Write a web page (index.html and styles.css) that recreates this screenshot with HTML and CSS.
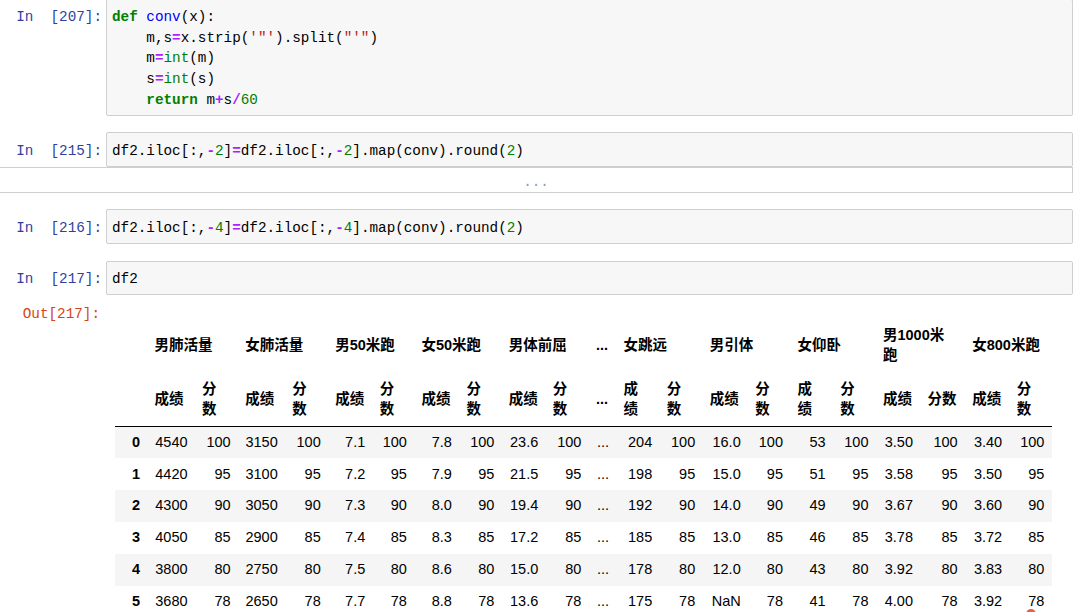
FILE: index.html
```html
<!DOCTYPE html>
<html lang="zh-CN">
<head>
<meta charset="utf-8">
<title>df2</title>
<link rel="stylesheet" href="styles.css">
</head>
<body>
<div class="nb">
  <div class="cell first">
    <div class="prompt in">In  [207]:</div>
    <div class="input code">
      <div class="line"><span class="k">def</span> <span class="nf">conv</span><span>(x):</span></div>
      <div class="line"><span>    m,s</span><span class="o">=</span><span>x.strip(</span><span class="s">'&quot;'</span><span>).split(</span><span class="s">&quot;'&quot;</span><span>)</span></div>
      <div class="line"><span>    m</span><span class="o">=</span><span class="nb2">int</span><span>(m)</span></div>
      <div class="line"><span>    s</span><span class="o">=</span><span class="nb2">int</span><span>(s)</span></div>
      <div class="line"><span>    </span><span class="k">return</span> <span>m</span><span class="o">+</span><span>s</span><span class="o">/</span><span class="mi">60</span></div>
    </div>
  </div>
  <div class="cell">
    <div class="prompt in">In  [215]:</div>
    <div class="input code">
      <div class="line"><span>df2.iloc[:,</span><span class="o">-</span><span class="mi">2</span><span>]</span><span class="o">=</span><span>df2.iloc[:,</span><span class="o">-</span><span class="mi">2</span><span>].map(conv).round(</span><span class="mi">2</span><span>)</span></div>
    </div>
  </div>
  <div class="collapsed">...</div>
  <div class="cell">
    <div class="prompt in">In  [216]:</div>
    <div class="input code">
      <div class="line"><span>df2.iloc[:,</span><span class="o">-</span><span class="mi">4</span><span>]</span><span class="o">=</span><span>df2.iloc[:,</span><span class="o">-</span><span class="mi">4</span><span>].map(conv).round(</span><span class="mi">2</span><span>)</span></div>
    </div>
  </div>
  <div class="cell">
    <div class="prompt in">In  [217]:</div>
    <div class="input code">
      <div class="line"><span>df2</span></div>
    </div>
  </div>
  <div class="output">
    <div class="prompt out">Out[217]:</div>
    <div class="out-body">
      <table class="dataframe">
        <colgroup>
          <col class="k0"><col class="k1"><col class="k2"><col class="k3"><col class="k4"><col class="k5"><col class="k6"><col class="k7"><col class="k8"><col class="k9"><col class="k10"><col class="k11"><col class="k12"><col class="k13"><col class="k14"><col class="k15"><col class="k16"><col class="k17"><col class="k18"><col class="k19"><col class="k20"><col class="k21">
        </colgroup>
        <thead>
          <tr>
            <th></th>
            <th colspan="2">男肺活量</th>
            <th colspan="2">女肺活量</th>
            <th colspan="2">男50米跑</th>
            <th colspan="2">女50米跑</th>
            <th colspan="2">男体前屈</th>
            <th>...</th>
            <th colspan="2">女跳远</th>
            <th colspan="2">男引体</th>
            <th colspan="2">女仰卧</th>
            <th colspan="2" class="wrap">男1000米跑</th>
            <th colspan="2">女800米跑</th>
          </tr>
          <tr>
            <th></th>
            <th>成绩</th><th><span class="v">分数</span></th>
            <th>成绩</th><th><span class="v">分数</span></th>
            <th>成绩</th><th><span class="v">分数</span></th>
            <th>成绩</th><th><span class="v">分数</span></th>
            <th>成绩</th><th><span class="v">分数</span></th>
            <th>...</th>
            <th><span class="v">成绩</span></th><th><span class="v">分数</span></th>
            <th>成绩</th><th><span class="v">分数</span></th>
            <th><span class="v">成绩</span></th><th><span class="v">分数</span></th>
            <th>成绩</th><th>分数</th>
            <th>成绩</th><th><span class="v">分数</span></th>
          </tr>
        </thead>
        <tbody>
          <tr><th>0</th><td>4540</td><td>100</td><td>3150</td><td>100</td><td>7.1</td><td>100</td><td>7.8</td><td>100</td><td>23.6</td><td>100</td><td>...</td><td>204</td><td>100</td><td>16.0</td><td>100</td><td>53</td><td>100</td><td>3.50</td><td>100</td><td>3.40</td><td>100</td></tr>
          <tr><th>1</th><td>4420</td><td>95</td><td>3100</td><td>95</td><td>7.2</td><td>95</td><td>7.9</td><td>95</td><td>21.5</td><td>95</td><td>...</td><td>198</td><td>95</td><td>15.0</td><td>95</td><td>51</td><td>95</td><td>3.58</td><td>95</td><td>3.50</td><td>95</td></tr>
          <tr><th>2</th><td>4300</td><td>90</td><td>3050</td><td>90</td><td>7.3</td><td>90</td><td>8.0</td><td>90</td><td>19.4</td><td>90</td><td>...</td><td>192</td><td>90</td><td>14.0</td><td>90</td><td>49</td><td>90</td><td>3.67</td><td>90</td><td>3.60</td><td>90</td></tr>
          <tr><th>3</th><td>4050</td><td>85</td><td>2900</td><td>85</td><td>7.4</td><td>85</td><td>8.3</td><td>85</td><td>17.2</td><td>85</td><td>...</td><td>185</td><td>85</td><td>13.0</td><td>85</td><td>46</td><td>85</td><td>3.78</td><td>85</td><td>3.72</td><td>85</td></tr>
          <tr><th>4</th><td>3800</td><td>80</td><td>2750</td><td>80</td><td>7.5</td><td>80</td><td>8.6</td><td>80</td><td>15.0</td><td>80</td><td>...</td><td>178</td><td>80</td><td>12.0</td><td>80</td><td>43</td><td>80</td><td>3.92</td><td>80</td><td>3.83</td><td>80</td></tr>
          <tr><th>5</th><td>3680</td><td>78</td><td>2650</td><td>78</td><td>7.7</td><td>78</td><td>8.8</td><td>78</td><td>13.6</td><td>78</td><td>...</td><td>175</td><td>78</td><td>NaN</td><td>78</td><td>41</td><td>78</td><td>4.00</td><td>78</td><td>3.92</td><td>78</td></tr>
        </tbody>
      </table>
    </div>
  </div>
</div>
<div class="badge"></div>
</body>
</html>
```
FILE: styles.css
```css
html, body {
  margin: 0;
  padding: 0;
  overflow: hidden;
  background: #fff;
}

.nb {
  padding-top: 0;
  margin-top: -1.5px;
  padding-right: 9px;
}

.cell {
  display: flex;
  align-items: flex-start;
  margin-top: 16.5px;
}

.cell.first {
  margin-top: 0;
}

.prompt {
  flex: none;
  width: 102px;
  margin-right: 4px;
  box-sizing: border-box;
  text-align: right;
  white-space: pre;
  font-family: "Liberation Mono", "DejaVu Sans Mono", monospace;
  font-size: 14.3px;
  line-height: 20.7px;
}

.prompt.in {
  color: #303F9F;
  padding-top: 8.5px;
}

.prompt.out {
  color: #D84315;
  padding-right: 2px;
}

.input {
  flex: 1;
  min-width: 0;
  background: #f7f7f7;
  border: 1px solid #cfcfcf;
  border-radius: 2px;
  padding: 7.5px 5px 4.5px;
}

.code {
  font-family: "Liberation Mono", "DejaVu Sans Mono", monospace;
  font-size: 14.3px;
  line-height: 20.7px;
  color: #000;
}

.code .line {
  white-space: pre;
  height: 20.7px;
}

.code .k { color: #008000; font-weight: bold; }
.code .nf { color: #0000FF; }
.code .o { color: #AA22FF; font-weight: bold; }
.code .nb2 { color: #008000; }
.code .s { color: #BA2121; }
.code .mi { color: #008000; }

.collapsed {
  height: 20.3px;
  padding-top: 3.5px;
  border: 1px solid #cfcfcf;
  border-left: none;
  background: #fff;
  text-align: center;
  font-family: "Liberation Mono", "DejaVu Sans Mono", monospace;
  font-size: 14.3px;
  line-height: 20.7px;
  color: #9a9aa8;
  overflow: hidden;
}

.output {
  display: flex;
  align-items: flex-start;
  margin-top: 8.6px;
}

.out-body {
  flex: 1;
  min-width: 0;
  padding-top: 14.5px;
  padding-left: 9px;
}

.dataframe {
  border-collapse: collapse;
  border-spacing: 0;
  table-layout: fixed;
  width: 936.6px;
  font-family: "Liberation Sans", Arial, "Noto Sans CJK SC", sans-serif;
  font-size: 14.5px;
  color: #000;
}

.dataframe th,
.dataframe td {
  padding: 7.25px;
  text-align: right;
  vertical-align: middle;
  font-weight: normal;
  border: none;
}

.dataframe thead {
  border-bottom: 1px solid #000;
}

.dataframe thead th {
  text-align: left;
  line-height: 20px;
  padding-top: 6.8px;
  padding-bottom: 6.8px;
  white-space: nowrap;
  font-weight: bold;
}

.dataframe thead th.wrap {
  white-space: normal;
  padding-right: 14px;
}

.dataframe .v {
  display: block;
  width: 1em;
  white-space: normal;
}

.dataframe tbody th,
.dataframe tbody td {
  line-height: 17.3px;
}

.dataframe tbody th {
  font-weight: bold;
}

.dataframe tbody tr:nth-child(odd) {
  background: #f5f5f5;
}

.k0 { width: 32.3px; }
.k1 { width: 47.5px; }
.k2 { width: 43.1px; }
.k3 { width: 47.1px; }
.k4 { width: 43px; }
.k5 { width: 44.5px; }
.k6 { width: 41.7px; }
.k7 { width: 45px; }
.k8 { width: 42.4px; }
.k9 { width: 43.9px; }
.k10 { width: 43.2px; }
.k11 { width: 27.6px; }
.k12 { width: 43.2px; }
.k13 { width: 43px; }
.k14 { width: 45.5px; }
.k15 { width: 42.3px; }
.k16 { width: 42.7px; }
.k17 { width: 42.8px; }
.k18 { width: 44.5px; }
.k19 { width: 44.7px; }
.k20 { width: 44.5px; }
.k21 { width: 42.1px; }

.badge {
  position: absolute;
  left: 1026px;
  top: 609px;
  width: 10px;
  height: 10px;
  border-radius: 50%;
  background: #e8603c;
}
```
